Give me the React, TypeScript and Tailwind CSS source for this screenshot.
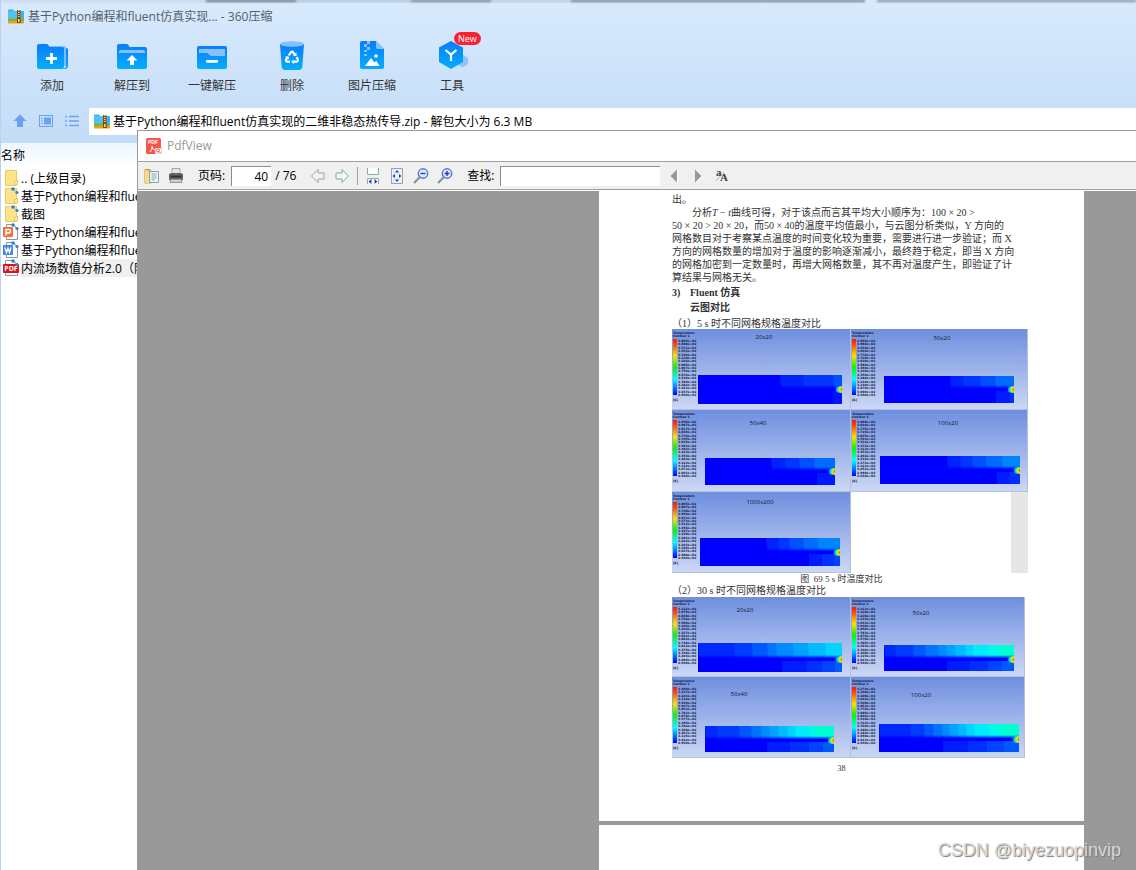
import React from "react";

const UI_FONT = "font-['Open_Sans','Noto_Sans_CJK_SC',sans-serif]";
const DOC_FONT = "font-['Liberation_Serif','Noto_Sans_CJK_SC',serif]";

/* ---------- Icons ---------- */

function BlueDefs() {
  return (
    <svg width="0" height="0" className="absolute" aria-hidden="true">
      <defs>
        <linearGradient id="blue" x1="0" y1="0" x2="0" y2="1">
          <stop offset="0" stopColor="#0a7cfb" />
          <stop offset="1" stopColor="#03aefc" />
        </linearGradient>
        <linearGradient id="legend" x1="0" y1="0" x2="0" y2="1">
          <stop offset="0" stopColor="#ff1800" />
          <stop offset="0.1" stopColor="#ff4a00" />
          <stop offset="0.3" stopColor="#ffe000" />
          <stop offset="0.5" stopColor="#10f000" />
          <stop offset="0.72" stopColor="#00ffff" />
          <stop offset="0.88" stopColor="#0070ff" />
          <stop offset="1" stopColor="#0000ff" />
        </linearGradient>
        <linearGradient id="sky" x1="0" y1="0" x2="0" y2="1">
          <stop offset="0" stopColor="#6e8edf" />
          <stop offset="1" stopColor="#cdd8f5" />
        </linearGradient>
        <linearGradient id="fade" x1="0" y1="0" x2="0" y2="1">
          <stop offset="0" stopColor="#0000ff" stopOpacity="0" />
          <stop offset="1" stopColor="#0000ff" stopOpacity="0.9" />
        </linearGradient>
        <radialGradient id="hot" cx="1" cy="0.5" r="1" fx="1" fy="0.5">
          <stop offset="0" stopColor="#ff3000" />
          <stop offset="0.2" stopColor="#ffb000" />
          <stop offset="0.38" stopColor="#c8f020" />
          <stop offset="0.6" stopColor="#20e890" />
          <stop offset="0.8" stopColor="#00b8ff" stopOpacity="0.8" />
          <stop offset="1" stopColor="#0060ff" stopOpacity="0" />
        </radialGradient>
      </defs>
    </svg>
  );
}

function ZipIcon() {
  return (
    <svg width="16" height="16" viewBox="0 0 16 16" className="shrink-0">
      <path d="M0 1.500Q0 .5 1 .5h4l1.500 1.500H15q1 0 1 1V11H0z" fill="#35b4f5" />
      <path d="M0 2h10v8H0z" fill="#5cc8fa" opacity=".7" />
      <path d="M0 9.500h16v2.500H0z" fill="#7cb82f" />
      <path d="M0 12h16v1.500q0 1-1 1H1q-1 0-1-1z" fill="#f29a1c" />
      <path d="M9 1h3.500v13H9z" fill="#8b4a14" />
      <path d="M10 1h1.500v1H10zm0 2h1.500v1H10zm0 2h1.500v1H10zm0 2h1.500v1H10z" fill="#f6d27a" />
      <rect x="9.500" y="9.500" width="2.500" height="4" fill="#ffd955" stroke="#5e2f08" strokeWidth=".7" />
    </svg>
  );
}

function AddIcon() {
  return (
    <svg width="40" height="34" viewBox="0 0 40 34">
      <path d="M12 7h20q2 0 2 2v18h-5z" fill="#7cbcfd" />
      <path d="M5 7q0-2 2-2h7.500q1 0 1.800 1l1.200 2H30q2 0 2 2v18q0 2-2 2H7q-2 0-2-2z" fill="url(#blue)" />
      <path d="M34 9q2 0 2 2v16q0 3-3 3h-2q3-1 3-3z" fill="url(#blue)" />
      <path d="M19.500 14v11M14 19.500h11" stroke="#fff" strokeWidth="2.800" />
    </svg>
  );
}

function ExtractIcon() {
  return (
    <svg width="40" height="34" viewBox="0 0 40 34">
      <path d="M5 7q0-2 2-2h7.500q1 0 1.800 1l1.200 2H33q2 0 2 2v18q0 2-2 2H7q-2 0-2-2z" fill="url(#blue)" />
      <path d="M7 14v-1.500Q7 11 8.500 11h23q1.500 0 1.500 1.500V14z" fill="#84c1ff" />
      <path d="M20 16l5.500 5.500h-3.500v4.500h-4v-4.500h-3.500z" fill="#fff" />
    </svg>
  );
}

function OneKeyIcon() {
  return (
    <svg width="40" height="34" viewBox="0 0 40 34">
      <rect x="5" y="7" width="30" height="23" rx="2" fill="url(#blue)" />
      <path d="M7 10h26v7H19.500q-1.500 0-2.500-1.500t-2.500-1.500H7z" fill="#84c1ff" />
      <rect x="14" y="21" width="12" height="2.800" rx="1" fill="#fff" />
    </svg>
  );
}

function DeleteIcon() {
  return (
    <svg width="40" height="34" viewBox="0 0 40 34">
      <path d="M8 5h24l-1.700 23q-.3 3-3.500 3H13.200q-3.200 0-3.500-3z" fill="url(#blue)" />
      <ellipse cx="20" cy="5" rx="12" ry="2.800" fill="#84c1ff" />
      <g fill="none" stroke="#fff" strokeWidth="2.200">
        <path d="M16.800 16.500l2-3.200q1.200-1.500 2.400 0l1.300 2" />
        <path d="M24.600 18l1.200 2.300q.6 2.200-1.500 2.400h-3" />
        <path d="M18 22.700h-2.700q-2-.3-1.200-2.200l1.200-2.200" />
      </g>
      <path d="M24.500 13.500v3.500h-3.700zM21.800 20.500v4.400l-2.600-2.200zM13 17.500l3.500-.2.800 3.200z" fill="#fff" />
    </svg>
  );
}

function ImageZipIcon() {
  return (
    <svg width="40" height="34" viewBox="0 0 40 34">
      <path d="M8 4q0-2 2-2h14l8 8v18q0 2-2 2H10q-2 0-2-2z" fill="url(#blue)" />
      <path d="M24 2l8 8h-6.500Q24 10 24 8.500z" fill="#84c1ff" />
      <path d="M15 2h3v3h-3zM12 5h3v3h-3zM15 8h3v3h-3zM12 11h3v2h-3zM12 15h3v2h-3z" fill="#84c1ff" />
      <path d="M13 27l6-8 3.500 4.500 1.800-1.800 3.200 5.300z" fill="#fff" />
      <circle cx="24" cy="17" r="1.800" fill="#fff" />
    </svg>
  );
}

function ToolsIcon() {
  return (
    <svg width="40" height="34" viewBox="0 0 40 34">
      <path d="M31 16l5 3v6l-5 3.500-6-3v-6z" fill="#8cc5fd" />
      <path d="M19 2l12 6.500v14.500l-12 7-12-7V8.500z" fill="url(#blue)" />
      <path d="M13.500 11l5.500 4.500 5.500-4.500M19 15.500v6.500" stroke="#fff" strokeWidth="2.200" fill="none" />
    </svg>
  );
}

function FolderGlyph({ spark }: { spark?: boolean }) {
  return (
    <svg width="16" height="18" viewBox="0 0 16 18" className="shrink-0">
      <path d="M2.500 1.500h11v15h-11z" fill="#ffe38a" stroke="#ecc95f" />
      <path d="M11.500 12.500l3-1v4l-3 1z" fill="#fff0b3" stroke="#e8c04e" />
      {spark && <Spark />}
    </svg>
  );
}

function Spark() {
  return (
    <>
      <path d="M9 1.500l5 4" stroke="#9cc8ec" strokeWidth="1.500" />
      <circle cx="10" cy="2" r="1.800" fill="#2e86c8" />
      <circle cx="14" cy="5.500" r="1.600" fill="#2e86c8" />
    </>
  );
}

function DocGlyph({ box, glyph }: { box: string; glyph: string }) {
  return (
    <svg width="16" height="18" viewBox="0 0 16 18" className="shrink-0">
      <path d="M3.500 1.500h7l4 4v11h-11z" fill="#fff" stroke="#8f959b" />
      <rect x="0" y="4" width="10" height="10" rx="1" className={box} />
      <path d={glyph} fill="none" stroke="#fff" strokeWidth="1.400" />
      <Spark />
    </svg>
  );
}

function PdfGlyph() {
  return (
    <svg width="16" height="18" viewBox="0 0 16 18" className="shrink-0">
      <path d="M2.500 1.500h8l4 4v11h-12z" fill="#fff" stroke="#8f959b" />
      <rect x="0" y="5" width="16" height="9" rx="1" fill="#e0101c" />
      <text x="8" y="12" textAnchor="middle" fontSize="7" fontWeight="700" fontFamily="Open Sans, sans-serif" fill="#fff">PDF</text>
      <Spark />
    </svg>
  );
}

/* ---------- Contour plots ---------- */

type Plot = {
  name: string;
  w: number;
  h: number;
  max: number;
  label: [number, number];
  bar: [number, number, number, number];
  split: number;
  top: [number, string][];
  bottom: [number, string][];
};

const cool = ["#0022ff", "#0036ff", "#0050ff", "#006cff", "#0084ff"];
const band = (xs: number[]): [number, string][] => xs.map((x, i) => [x, cool[i]]);
const low = (xs: number[]): [number, string][] => xs.map((x, i) => [x, ["#001cff", "#0030ff", "#0044ff", "#0058ff"][i]]);
const warmColors = ["#0028ff", "#003cff", "#0058ff", "#0074ff", "#008cff", "#00a4ff", "#00bcff", "#00d4ff", "#00ecf8", "#00fbe4", "#00ffd0"];
const warm = (xs: number[]): [number, string][] => xs.map((x, i) => [x, warmColors[i]]);

const plots5: Plot[] = [
  { name: "20x20", w: 179, h: 81, max: 4.805, label: [92, 10], bar: [26, 46, 170, 75], split: 59, top: band([108, 131, 161]), bottom: [[161, "#0012ff"]] },
  { name: "50x20", w: 177, h: 81, max: 4.05, label: [91, 11], bar: [33, 47, 163, 74], split: 59, top: band([99, 112, 129, 144]), bottom: low([145, 159]) },
  { name: "50x40", w: 179, h: 82, max: 4.058, label: [86, 15], bar: [33, 48, 163, 75], split: 60, top: band([99, 113, 127, 142]), bottom: [[145, "#0018ff"]] },
  { name: "100x20", w: 177, h: 82, max: 3.896, label: [97, 15], bar: [29, 46, 169, 74], split: 59, top: band([96, 109, 121, 135, 151]), bottom: low([146, 159]) },
  { name: "1000x200", w: 179, h: 81, max: 3.865, label: [88, 12], bar: [28, 46, 168, 74], split: 59, top: band([94, 106, 117, 131, 146]), bottom: low([137, 150, 162]) },
];

const plots30: Plot[] = [
  { name: "20x20", w: 179, h: 80, max: 5.111, label: [73, 15], bar: [26, 46, 170, 75], split: 61, top: warm([26, 62, 80, 95, 104, 121, 136, 153]), bottom: low([110, 135, 150, 163]) },
  { name: "50x20", w: 174, h: 80, max: 4.411, label: [70, 18], bar: [33, 48, 163, 74], split: 61, top: warm([33, 44, 62, 74, 87, 95, 104, 114, 122, 137, 148]), bottom: low([96, 119, 137, 151]) },
  { name: "50x40", w: 179, h: 81, max: 4.409, label: [67, 19], bar: [33, 49, 162, 75], split: 62, top: warm([33, 45, 67, 79, 89, 97, 106, 115, 123, 137, 145]), bottom: low([95, 118, 137, 151]) },
  { name: "100x20", w: 174, h: 81, max: 4.274, label: [70, 20], bar: [28, 47, 168, 75], split: 61, top: warm([28, 59, 73, 82, 91, 98, 107, 115, 123, 138, 150]), bottom: low([92, 117, 136, 153]) },
];

function Contour({ plot }: { plot: Plot }) {
  const [x0, y0, x1, y1] = plot.bar;
  const min = 2.93;
  return (
    <svg width={plot.w} height={plot.h} viewBox={`0 0 ${plot.w} ${plot.h}`} className="block" fontFamily="DejaVu Sans, sans-serif">
      <rect width={plot.w} height={plot.h} fill="url(#sky)" />
      <path d={`M0 ${plot.h - 0.5}H${plot.w}M${plot.w - 0.5} 0V${plot.h}`} stroke="#b4bfd8" />
      <g fontSize="3" fontWeight="700" fill="#101a3c">
        <text x="1" y="5">Temperature</text>
        <text x="1" y="8">Contour 1</text>
        {Array.from({ length: 17 }, (_, i) => (
          <text key={i} x="6" y={13 + i * 3.375}>
            {(plot.max - ((plot.max - min) * i) / 16).toFixed(3)}e+02
          </text>
        ))}
        <text x="1" y="72">[K]</text>
      </g>
      <rect x="1" y="10" width="4" height="56" fill="url(#legend)" />
      <text x={plot.label[0]} y={plot.label[1]} fontSize="6" textAnchor="middle" fontFamily="Open Sans, sans-serif" fill="#101830">{plot.name}</text>
      <rect x={x0} y={y0} width={x1 - x0} height={y1 - y0} fill="#0000ff" />
      {plot.bottom.map(([x, c]) => (
        <rect key={x} x={x} y={plot.split + 3} width={x1 - x} height={y1 - plot.split - 3} fill={c} />
      ))}
      {plot.top.map(([x, c]) => (
        <path key={x} d={`M${x} ${y0}H${x1}V${plot.split}H${x + 1}z`} fill={c} />
      ))}
      <rect x={x0} y={plot.split - 3} width={x1 - x0} height="3" fill="url(#fade)" />
      <path d={`M${x1} ${plot.split - 2}q-7 0 -7 3.500t7 3.500z`} fill="url(#hot)" />
    </svg>
  );
}

/* ---------- Archive window ---------- */

const tools: { name: string; icon: React.ReactNode; isNew?: boolean }[] = [
  { name: "添加", icon: <AddIcon /> },
  { name: "解压到", icon: <ExtractIcon /> },
  { name: "一键解压", icon: <OneKeyIcon /> },
  { name: "删除", icon: <DeleteIcon /> },
  { name: "图片压缩", icon: <ImageZipIcon /> },
  { name: "工具", icon: <ToolsIcon />, isNew: true },
];

const files: { name: string; icon: React.ReactNode; selected?: boolean }[] = [
  { name: ".. (上级目录)", icon: <FolderGlyph /> },
  { name: "基于Python编程和fluent", icon: <FolderGlyph spark /> },
  { name: "截图", icon: <FolderGlyph spark /> },
  { name: "基于Python编程和fluent", icon: <DocGlyph box="fill-[#f2703a]" glyph="M3 12.500V6.500h2.500q2 0 2 1.700T5.500 10H3" /> },
  { name: "基于Python编程和fluent", icon: <DocGlyph box="fill-[#4285f0]" glyph="M2 6.500l1.500 5L5 7.500l1.500 4 1.500-5" /> },
  { name: "内流场数值分析2.0（附", icon: <PdfGlyph />, selected: true },
];

function ArchiveWindow() {
  return (
    <div className="flex min-h-screen flex-col border-l border-[#b9d3f0] bg-white text-xs text-black">
      <header className="bg-gradient-to-b from-[#d8eafd] to-[#c3dcf7]">
        <div className="flex h-[2px] blur-[1px]">
          <span className="w-[205px] bg-[#c3d4e5]" />
          <span className="w-[90px] bg-[#5d6a78]" />
          <span className="w-[115px] bg-[#a9bccf]" />
          <span className="w-20 bg-[#6a7785]" />
          <span className="w-20 bg-[#b4c5d6]" />
          <span className="w-[294px] bg-[#6a7785]" />
          <span className="w-3 bg-[#d8eafd]" />
          <span className="grow bg-[#7f8e9d]" />
        </div>
        <div className="flex h-[30px] items-center gap-1 pl-[7px] text-[#55606c]">
          <ZipIcon />
          <h1 className="whitespace-nowrap">基于Python编程和fluent仿真实现... - 360压缩</h1>
        </div>
        <nav className="flex h-[75px] pl-[11px] text-[#333]">
          {tools.map((t) => (
            <button key={t.name} type="button" className="relative flex w-20 flex-col items-center pt-[7px]">
              {t.icon}
              <span className="mt-[5px] whitespace-nowrap leading-4">{t.name}</span>
              {t.isNew && (
                <span className="absolute left-[42px] top-0 rounded-full bg-[#fb2130] px-1 text-[9px] leading-[13px] text-white">New</span>
              )}
            </button>
          ))}
        </nav>
        <div className="flex h-9 items-start">
          <div className="flex h-7 w-[88px] items-center gap-[10px] pl-[11px]">
            <button type="button" aria-label="向上">
              <svg width="16" height="16" viewBox="0 0 16 16" className="fill-[#6ba2ec]"><path d="M8 1.500l6.500 6.500H11v6H5V8H1.500z" /></svg>
            </button>
            <button type="button" aria-label="预览">
              <svg width="16" height="16" viewBox="0 0 16 16" fill="none" stroke="#6ba2ec"><rect x="1.500" y="2.500" width="13" height="11" /><path d="M3 5.500h2M3 8h2M3 10.500h2" /><rect x="6.500" y="5" width="6" height="6" fill="#6ba2ec" /></svg>
            </button>
            <button type="button" aria-label="列表">
              <svg width="16" height="16" viewBox="0 0 16 16" stroke="#6ba2ec" strokeWidth="1.600"><path d="M1 3.500h2M5 3.500h10M1 8h2M5 8h10M1 12.500h2M5 12.500h10" /></svg>
            </button>
          </div>
          <div className="mt-px flex h-[27px] grow items-center gap-[3px] bg-white pl-[5px]">
            <ZipIcon />
            <span className="whitespace-nowrap">基于Python编程和fluent仿真实现的二维非稳态热传导.zip - 解包大小为 6.3 MB</span>
          </div>
        </div>
      </header>
      <section className="w-[200px] grow">
        <h2 className="h-[26px] bg-gradient-to-b from-[#eef6fe] to-white pt-[5px] leading-4">名称</h2>
        <ul>
          {files.map((f, i) => (
            <li key={i} className="flex h-[18px] items-center gap-[2px] pl-[2px]">
              {f.icon}
              <span className={f.selected ? "grow whitespace-nowrap bg-[#f0f0f0] pt-px leading-[17px]" : "whitespace-nowrap pt-px leading-[17px]"}>{f.name}</span>
            </li>
          ))}
        </ul>
      </section>
    </div>
  );
}

/* ---------- PDF window ---------- */

function ToolButton({ label, children }: { label: string; children: React.ReactNode }) {
  return (
    <button type="button" aria-label={label} className="flex h-6 w-6 shrink-0 items-center justify-center">
      <svg width="16" height="16" viewBox="0 0 16 16" fill="none">{children}</svg>
    </button>
  );
}

function PdfToolbar() {
  return (
    <div className="flex h-[28px] items-center border-b border-[#a0a0a0] bg-[#f0f0f0] pl-[2px] text-xs">
      <ToolButton label="打开">
        <path d="M1 1.500h5l1 1.500v12H1z" fill="#eebf5c" stroke="#c99534" />
        <path d="M5.500 3.500h9v11h-9z" fill="#e9f2f4" stroke="#89a3a8" />
        <path d="M7.500 6h5M7.500 8h5M7.500 10h5M7.500 12h3" stroke="#8ea9ae" />
        <path d="M1 2l4 2v12l-4-1.500z" fill="#f9d98c" />
      </ToolButton>
      <ToolButton label="打印">
        <path d="M4 .5h8V6H4z" fill="#dce7ea" stroke="#9aa7ab" />
        <path d="M1 6l2-1h10l2 1v6H1z" fill="#63686d" />
        <path d="M2.500 8.500h11" stroke="#2d3034" strokeWidth="2" />
        <path d="M3 11.500h10l1 3H2z" fill="#c3d6dc" stroke="#8b979b" />
      </ToolButton>
      <label htmlFor="page" className="ml-[10px] whitespace-nowrap">页码:</label>
      <input id="page" defaultValue="40" className="ml-[6px] h-5 w-10 border-l border-t border-[#8c8c8c] bg-white pr-[3px] text-right outline-none" />
      <span className="ml-1 w-[31px] whitespace-nowrap">/ 76</span>
      <ToolButton label="上一页">
        <path d="M1.500 8L8 1.500V5h6v6H8v3.500z" fill="#edf6f2" stroke="#8fa69d" />
      </ToolButton>
      <ToolButton label="下一页">
        <path d="M14.500 8L8 1.500V5H2v6h6v3.500z" fill="#edf6f2" stroke="#8fa69d" />
      </ToolButton>
      <span className="mx-[3px] h-[18px] w-px bg-[#a0a0a0]" />
      <ToolButton label="适合宽度">
        <path d="M2.500 0v6.500h11V0M2.500 16v-5.500h11V16" fill="#f7fbfb" stroke="#93a8ac" />
        <path d="M6.500 11v5L3.500 13.500zM9.500 11v5l3-2.500z" fill="#2145c8" />
      </ToolButton>
      <ToolButton label="适合页面">
        <path d="M2.500.5h11v15h-11z" fill="#e8f2f5" stroke="#93a8ac" />
        <path d="M8 2l2 2.500H6zM8 14l2-2.500H6zM3.500 8l2.500-2v4zM12.500 8L10 6v4z" fill="#2145c8" />
      </ToolButton>
      <ToolButton label="缩小">
        <path d="M1 15l5.500-5.500" stroke="#8a8f98" strokeWidth="2.200" />
        <circle cx="10" cy="5.500" r="4.700" fill="#dfeafd" stroke="#5a78cf" strokeWidth="1.400" />
        <path d="M7.500 5.500h5" stroke="#1e3db5" strokeWidth="1.400" />
      </ToolButton>
      <ToolButton label="放大">
        <path d="M1 15l5.500-5.500" stroke="#8a8f98" strokeWidth="2.200" />
        <circle cx="10" cy="5.500" r="4.700" fill="#dfeafd" stroke="#5a78cf" strokeWidth="1.400" />
        <path d="M7.500 5.500h5M10 3v5" stroke="#1e3db5" strokeWidth="1.400" />
      </ToolButton>
      <label htmlFor="find" className="ml-[10px] whitespace-nowrap">查找:</label>
      <input id="find" className="ml-[6px] h-5 w-40 border-l border-t border-[#8c8c8c] bg-white outline-none" />
      <span className="ml-[2px] flex">
        <ToolButton label="查找上一个">
          <path d="M12 2v13L5 8.500z" fill="#fff" />
          <path d="M11 1.500v13L4.500 8z" fill="#989898" />
        </ToolButton>
        <ToolButton label="查找下一个">
          <path d="M6 2v13l7-6.500z" fill="#fff" />
          <path d="M5 1.500v13L11.500 8z" fill="#989898" />
        </ToolButton>
        <button type="button" aria-label="区分大小写" className="flex h-6 w-6 items-center justify-center">
          <svg width="18" height="20" viewBox="0 0 18 20" fontFamily="Liberation Serif, serif" fontWeight="700" fill="#3c3c3c">
            <path d="M3 15L11 6" stroke="#b4b4b4" />
            <text x="3" y="10" fontSize="11">a</text>
            <text x="7" y="15" fontSize="11">A</text>
          </svg>
        </button>
      </span>
    </div>
  );
}

const paragraph: React.ReactNode[] = [
  "出。",
  <span className="pl-5">分析<i>T</i> − <i>t</i>曲线可得，对于该点而言其平均大小顺序为：100 × 20 &gt;</span>,
  "50 × 20 > 20 × 20，而50 × 40的温度平均值最小，与云图分析类似，Y 方向的",
  "网格数目对于考察某点温度的时间变化较为重要，需要进行进一步验证；而 X",
  "方向的网格数量的增加对于温度的影响逐渐减小，最终趋于稳定，即当 X 方向",
  "的网格加密到一定数量时，再增大网格数量，其不再对温度产生，即验证了计",
  "算结果与网格无关。",
];

function PdfPage() {
  return (
    <article className={`h-[630px] w-[485px] overflow-hidden bg-white px-[73px] pt-[2px] text-[10px] leading-[13px] text-[#333] ${DOC_FONT}`}>
      {paragraph.map((line, i) => (
        <p key={i} className="whitespace-nowrap">{line}</p>
      ))}
      <h3 className="flex pt-[2px] font-bold"><span className="w-[18px]">3)</span>Fluent 仿真</h3>
      <h4 className="pl-[18px] pt-[2px] font-bold">云图对比</h4>
      <p className="whitespace-nowrap pt-[3px]">（1）5 s 时不同网格规格温度对比</p>
      <div className="-mt-px flex w-[356px] flex-wrap">
        {plots5.map((p) => <Contour key={p.name} plot={p} />)}
        <div className="h-[81px] grow border-r-[17px] border-[#e6e6e6]" />
      </div>
      <p className="text-center text-[9px] leading-3">图&nbsp; 69 5 s 时温度对比</p>
      <p className="whitespace-nowrap leading-3">（2）30 s 时不同网格规格温度对比</p>
      <div className="flex w-[353px] flex-wrap">
        {plots30.map((p) => <Contour key={p.name} plot={p} />)}
      </div>
      <p className="pt-1 text-center text-[8px]">38</p>
    </article>
  );
}

function PdfWindow() {
  return (
    <section className="absolute inset-0 left-[137px] top-[130px] flex flex-col overflow-hidden border-l border-t border-[#999] bg-white">
      <div className="flex h-[31px] shrink-0 items-center gap-[5px] border-b border-[#a0a0a0] pl-2 text-xs text-[#999]">
        <svg width="16" height="16" viewBox="0 0 16 16">
          <rect width="15" height="16" rx="1.500" fill="#f4574e" />
          <text x="2" y="6" fontSize="5" fontWeight="700" fontFamily="Liberation Sans, sans-serif" fill="#fff">PDF</text>
          <path d="M6 8q1 3-2 6M6 9q1 3 3 3" stroke="#fff" fill="none" />
          <path d="M9 10h7v6H9z" fill="#fff" stroke="#f4574e" strokeWidth=".5" />
          <circle cx="12" cy="12.500" r="1.500" fill="none" stroke="#f4574e" />
          <path d="M13 13.500l1.500 1.500" stroke="#f4574e" />
        </svg>
        <h2>PdfView</h2>
      </div>
      <PdfToolbar />
      <div className="mt-px flex min-h-0 grow flex-col gap-1 overflow-hidden bg-[#999] pl-[461px]">
        <PdfPage />
        <div className="w-[485px] grow bg-white" />
      </div>
    </section>
  );
}

export default function App() {
  return (
    <main className={`relative min-h-screen overflow-hidden ${UI_FONT}`}>
      <BlueDefs />
      <ArchiveWindow />
      <PdfWindow />
      <p className="absolute bottom-1 right-[15px] font-['Liberation_Sans',sans-serif] text-[18px] leading-8 text-[#d8d8d8] [text-shadow:1px_1px_1px_#777]">CSDN @biyezuopinvip</p>
    </main>
  );
}
